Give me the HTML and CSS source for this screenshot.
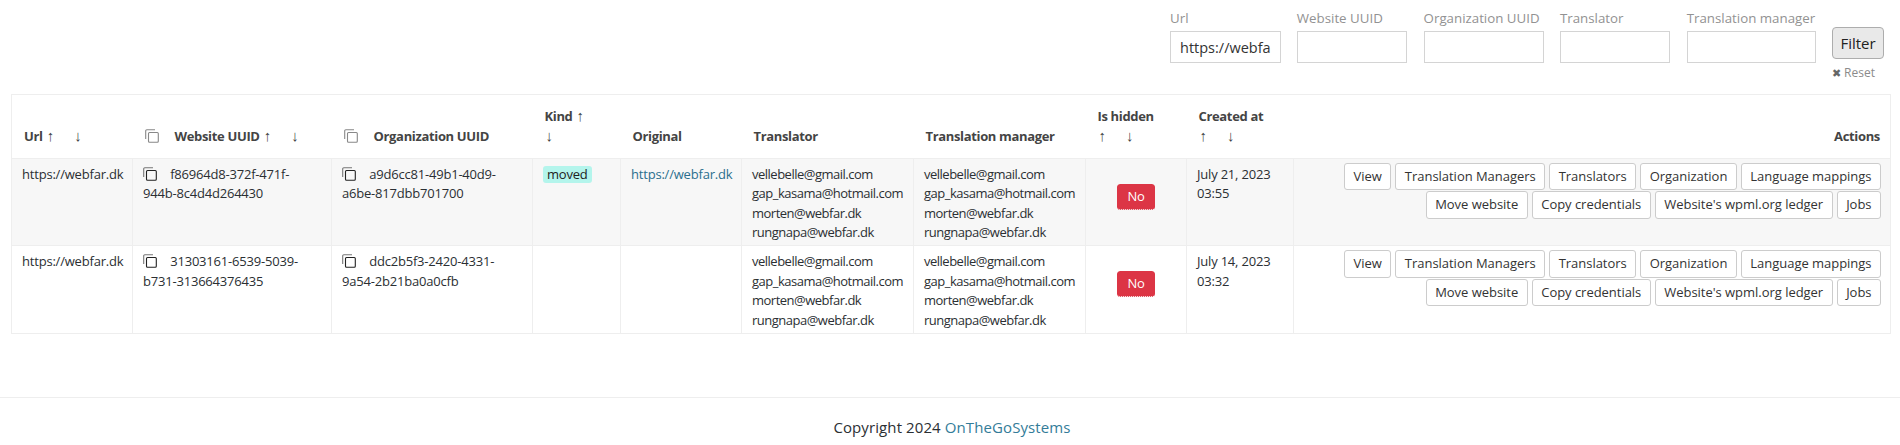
FILE: index.html
```html
<!DOCTYPE html>
<html lang="en">
<head>
  <meta charset="UTF-8" />
  <title>Websites</title>
  <link rel="stylesheet" href="styles.css">
</head>
<body>

  <form class="filters">
    <div class="field">
      <label for="url">Url</label>
      <input id="url" type="text" value="https://webfar.dk">
    </div>
    <div class="field">
      <label for="website">Website UUID</label>
      <input id="website" type="text">
    </div>
    <div class="field field-org">
      <label for="org">Organization UUID</label>
      <input id="org" type="text">
    </div>
    <div class="field">
      <label for="translator">Translator</label>
      <input id="translator" type="text">
    </div>
    <div class="field field-manager">
      <label for="manager">Translation manager</label>
      <input id="manager" type="text">
    </div>
    <div class="filter-actions">
      <button class="btn-filter" type="button">Filter</button>
      <a class="reset" href="#"><span class="reset-x">✖</span> Reset</a>
    </div>
  </form>

  <table class="sites">
    <colgroup>
      <col class="c-url"><col class="c-website"><col class="c-org"><col class="c-kind"><col class="c-original">
      <col class="c-translator"><col class="c-manager"><col class="c-hidden"><col class="c-created"><col>
    </colgroup>
    <thead>
      <tr>
        <th>Url <a class="up" href="#">↑</a><a class="down" href="#">↓</a></th>
        <th>
          <svg class="copy copy-head" viewBox="0 0 14 14"><path class="back" d="M.7 10V1.8a1.1 1.1 0 0 1 1.1-1.1H10"/><rect class="front" x="3.5" y="3.5" width="9.8" height="9.8" rx="1"/></svg>
          <span class="head-label">Website UUID</span> <a class="up" href="#">↑</a><a class="down" href="#">↓</a>
        </th>
        <th>
          <svg class="copy copy-head" viewBox="0 0 14 14"><path class="back" d="M.7 10V1.8a1.1 1.1 0 0 1 1.1-1.1H10"/><rect class="front" x="3.5" y="3.5" width="9.8" height="9.8" rx="1"/></svg>
          <span class="head-label">Organization UUID</span>
        </th>
        <th>Kind <a class="up" href="#">↑</a><br><a href="#">↓</a></th>
        <th>Original</th>
        <th>Translator</th>
        <th>Translation manager</th>
        <th>Is hidden<br><a href="#">↑</a><a class="down" href="#">↓</a></th>
        <th>Created at<br><a href="#">↑</a><a class="down" href="#">↓</a></th>
        <th class="actions-head">Actions</th>
      </tr>
    </thead>
    <tbody>
      <tr class="odd">
        <td>https://webfar.dk</td>
        <td>
          <svg class="copy" viewBox="0 0 14 14"><path class="back" d="M.7 10V1.8a1.1 1.1 0 0 1 1.1-1.1H10"/><rect class="front" x="3.5" y="3.5" width="9.8" height="9.8" rx="1"/></svg>
          <span class="uuid">f86964d8-372f-471f-944b-8c4d4d264430</span>
        </td>
        <td>
          <svg class="copy" viewBox="0 0 14 14"><path class="back" d="M.7 10V1.8a1.1 1.1 0 0 1 1.1-1.1H10"/><rect class="front" x="3.5" y="3.5" width="9.8" height="9.8" rx="1"/></svg>
          <span class="uuid">a9d6cc81-49b1-40d9-a6be-817dbb701700</span>
        </td>
        <td><span class="kind">moved</span></td>
        <td><a class="link" href="#">https://webfar.dk</a></td>
        <td class="emails">vellebelle@gmail.com<br>gap_kasama@hotmail.com<br>morten@webfar.dk<br>rungnapa@webfar.dk</td>
        <td class="emails">vellebelle@gmail.com<br>gap_kasama@hotmail.com<br>morten@webfar.dk<br>rungnapa@webfar.dk</td>
        <td class="hidden-cell"><span class="no">No</span></td>
        <td>July 21, 2023<br>03:55</td>
        <td class="actions">
          <a class="btn" href="#">View</a>
          <a class="btn" href="#">Translation Managers</a>
          <a class="btn" href="#">Translators</a>
          <a class="btn" href="#">Organization</a>
          <a class="btn" href="#">Language mappings</a>
          <a class="btn" href="#">Move website</a>
          <a class="btn" href="#">Copy credentials</a>
          <a class="btn" href="#">Website's wpml.org ledger</a>
          <a class="btn" href="#">Jobs</a>
        </td>
      </tr>
      <tr>
        <td>https://webfar.dk</td>
        <td>
          <svg class="copy" viewBox="0 0 14 14"><path class="back" d="M.7 10V1.8a1.1 1.1 0 0 1 1.1-1.1H10"/><rect class="front" x="3.5" y="3.5" width="9.8" height="9.8" rx="1"/></svg>
          <span class="uuid">31303161-6539-5039-b731-313664376435</span>
        </td>
        <td>
          <svg class="copy" viewBox="0 0 14 14"><path class="back" d="M.7 10V1.8a1.1 1.1 0 0 1 1.1-1.1H10"/><rect class="front" x="3.5" y="3.5" width="9.8" height="9.8" rx="1"/></svg>
          <span class="uuid">ddc2b5f3-2420-4331-9a54-2b21ba0a0cfb</span>
        </td>
        <td></td>
        <td></td>
        <td class="emails">vellebelle@gmail.com<br>gap_kasama@hotmail.com<br>morten@webfar.dk<br>rungnapa@webfar.dk</td>
        <td class="emails">vellebelle@gmail.com<br>gap_kasama@hotmail.com<br>morten@webfar.dk<br>rungnapa@webfar.dk</td>
        <td class="hidden-cell"><span class="no">No</span></td>
        <td>July 14, 2023<br>03:32</td>
        <td class="actions">
          <a class="btn" href="#">View</a>
          <a class="btn" href="#">Translation Managers</a>
          <a class="btn" href="#">Translators</a>
          <a class="btn" href="#">Organization</a>
          <a class="btn" href="#">Language mappings</a>
          <a class="btn" href="#">Move website</a>
          <a class="btn" href="#">Copy credentials</a>
          <a class="btn" href="#">Website's wpml.org ledger</a>
          <a class="btn" href="#">Jobs</a>
        </td>
      </tr>
    </tbody>
  </table>

  <footer class="footer">
    Copyright 2024 <a href="#">OnTheGoSystems</a>
  </footer>

</body>
</html>
```

FILE: styles.css
```css
body {
  margin: 0;
  font-family: "Open Sans", "Liberation Sans", sans-serif;
  font-size: 13px;
  line-height: 19.5px;
  letter-spacing: -0.2px;
  color: #2b2f33;
  background: #fff;
}
.filters {
  display: flex;
  justify-content: flex-end;
  gap: 16.3px;
  height: 94px;
  box-sizing: border-box;
  padding: 9px 16px 0 0;
}
.field {
  display: flex;
  flex-direction: column;
  width: 110.5px;
}
.field-org {
  width: 120px;
}
.field-manager {
  width: 129px;
}
.field label {
  color: #929292;
  font-size: 13.3px;
  letter-spacing: 0;
  margin-bottom: 2.5px;
  white-space: nowrap;
}
.field input {
  width: 100%;
  height: 32px;
  box-sizing: border-box;
  padding: 0 9px;
  border: 1px solid #d4d4d4;
  font-family: inherit;
  font-size: 14.5px;
  color: #333;
}
.filter-actions {
  display: flex;
  flex-direction: column;
  width: 52px;
  margin-top: 18px;
}
.btn-filter {
  height: 32px;
  padding: 0;
  background: #e9e9e9;
  border: 1px solid #adadad;
  border-radius: 4px;
  font-family: inherit;
  font-size: 15px;
  color: #222;
}
.reset {
  margin-top: 4px;
  font-size: 12px;
  line-height: 20px;
  letter-spacing: 0;
  color: #8b8b8b;
  text-decoration: none;
  white-space: nowrap;
}
.reset-x {
  color: #666;
  font-size: 11px;
}
.sites {
  width: 1880px;
  margin-left: 11px;
  table-layout: fixed;
  border-collapse: collapse;
  border: 1px solid #eee;
}
.c-url { width: 121px; }
.c-website { width: 199px; }
.c-org { width: 201px; }
.c-kind { width: 88px; }
.c-original { width: 121px; }
.c-translator { width: 172px; }
.c-manager { width: 172px; }
.c-hidden { width: 101px; }
.c-created { width: 107px; }
.sites th {
  padding: 12px 12px 11.5px;
  text-align: left;
  vertical-align: bottom;
  font-weight: 700;
  letter-spacing: -0.34px;
  color: #444;
  border-bottom: 1px solid #eee;
}
.sites th a {
  margin-left: 1px;
  font-family: "Liberation Sans", sans-serif;
  font-size: 15px;
  line-height: 0;
  font-weight: 400;
  letter-spacing: 0;
  color: #444;
  text-decoration: none;
}
.sites th .down {
  margin-left: 20px;
}
.sites th .head-label {
  margin-left: 13px;
}
.sites th.actions-head {
  text-align: right;
  padding-right: 10px;
}
.sites td {
  padding: 6px 10px 2.5px;
  vertical-align: top;
  border: 1px solid #eee;
}
.odd td {
  background: #f7f7f7;
}
.sites td.emails {
  letter-spacing: -0.5px;
}
.copy {
  width: 14px;
  height: 14px;
  vertical-align: -2px;
  fill: none;
  stroke-width: 1.1;
}
.copy .back {
  stroke: #777;
}
.copy .front {
  stroke: #222;
}
.copy-head .back,
.copy-head .front {
  stroke: #888;
}
.uuid {
  margin-left: 10px;
}
.kind {
  display: inline-block;
  padding: 0 4px;
  line-height: 17px;
  background: #b4f5ec;
  border-radius: 3px;
  color: #222;
}
.link {
  color: #2b6f8e;
  text-decoration: none;
}
.sites td.hidden-cell {
  text-align: center;
}
.no {
  display: inline-block;
  width: 38px;
  height: 26px;
  margin-top: 19px;
  box-sizing: border-box;
  line-height: 25px;
  background: #dc3545;
  background-clip: padding-box;
  border-bottom: 1px dotted #dc3545;
  border-radius: 3px;
  color: #fff;
}
.sites td.actions {
  padding: 4px 9px 2.5px 0;
  text-align: right;
  font-size: 0;
}
.btn {
  display: inline-block;
  margin: 0 0 1px 4px;
  padding: 3px 8.5px;
  border: 1px solid #ccc;
  border-radius: 3px;
  background: #fff;
  color: #333;
  font-size: 13px;
  line-height: 19.5px;
  letter-spacing: -0.03px;
  text-decoration: none;
}
.footer {
  margin-top: 63px;
  padding: 18px 0 0 4px;
  border-top: 1px solid #eee;
  text-align: center;
  font-size: 15px;
  line-height: 22px;
  letter-spacing: 0.1px;
  color: #2b2f33;
}
.footer a {
  color: #337c99;
  text-decoration: none;
}
```
